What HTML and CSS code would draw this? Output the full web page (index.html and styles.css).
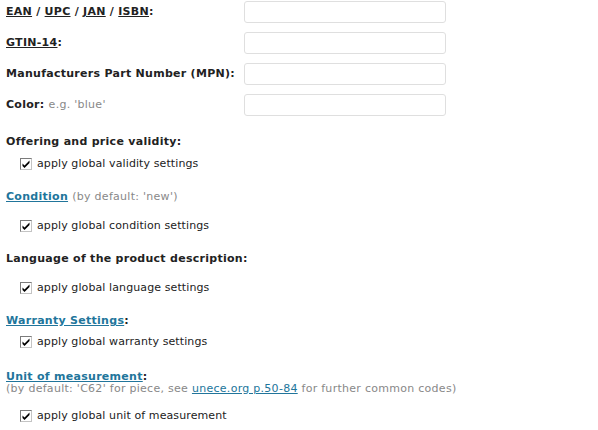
FILE: index.html
```html
<!DOCTYPE html>
<html>
<head>
<meta charset="utf-8">
<link rel="stylesheet" href="styles.css">
</head>
<body>
<div class="page">
  <div class="fields">
    <div class="label"><a class="plain">EAN</a> / <a class="plain">UPC</a> / <a class="plain">JAN</a> / <a class="plain">ISBN</a>:</div>
    <div class="input"></div>
    <div class="label"><a class="plain">GTIN-14</a>:</div>
    <div class="input"></div>
    <div class="label">Manufacturers Part Number (MPN):</div>
    <div class="input"></div>
    <div class="label">Color: <span class="hint">e.g. 'blue'</span></div>
    <div class="input"></div>
  </div>

  <div class="section s-offer">
    <div class="head">Offering and price validity:</div>
    <div class="check"><span class="box"><svg viewBox="0 0 10 10" width="10" height="10"><path d="M1.5 4.5 L3.5 6.5 L8.5 1.5 L8.5 4 L3.5 9 L1.5 7 Z" fill="#000"/></svg></span>apply global validity settings</div>
  </div>

  <div class="section s-cond">
    <div class="head"><a class="link">Condition</a> <span class="hint">(by default: 'new')</span></div>
    <div class="check"><span class="box"><svg viewBox="0 0 10 10" width="10" height="10"><path d="M1.5 4.5 L3.5 6.5 L8.5 1.5 L8.5 4 L3.5 9 L1.5 7 Z" fill="#000"/></svg></span>apply global condition settings</div>
  </div>

  <div class="section s-lang">
    <div class="head">Language of the product description:</div>
    <div class="check"><span class="box"><svg viewBox="0 0 10 10" width="10" height="10"><path d="M1.5 4.5 L3.5 6.5 L8.5 1.5 L8.5 4 L3.5 9 L1.5 7 Z" fill="#000"/></svg></span>apply global language settings</div>
  </div>

  <div class="section s-warr">
    <div class="head"><a class="link">Warranty Settings</a>:</div>
    <div class="check"><span class="box"><svg viewBox="0 0 10 10" width="10" height="10"><path d="M1.5 4.5 L3.5 6.5 L8.5 1.5 L8.5 4 L3.5 9 L1.5 7 Z" fill="#000"/></svg></span>apply global warranty settings</div>
  </div>

  <div class="section s-unit">
    <div class="head"><a class="link">Unit of measurement</a>:</div>
    <div class="sub">(by default: 'C62' for piece, see <a class="link thin">unece.org p.50-84</a> for further common codes)</div>
    <div class="check"><span class="box"><svg viewBox="0 0 10 10" width="10" height="10"><path d="M1.5 4.5 L3.5 6.5 L8.5 1.5 L8.5 4 L3.5 9 L1.5 7 Z" fill="#000"/></svg></span>apply global unit of measurement</div>
  </div>
</div>
</body>
</html>
```

FILE: styles.css
```css
html, body {
  margin: 0;
  padding: 0;
  background: #fff;
}
body {
  font-family: "DejaVu Sans", Verdana, sans-serif;
  font-size: 11px;
  letter-spacing: 0.28px;
  color: #222;
}
.page {
  padding: 1px 0 0 6px;
}
.fields {
  display: grid;
  grid-template-columns: 238px 202px;
  row-gap: 9px;
  align-items: center;
}
.label {
  font-weight: bold;
  line-height: 14px;
}
.plain {
  color: #222;
  text-decoration: underline;
}
.input {
  height: 20px;
  border: 1px solid #dfdfdf;
  border-radius: 3px;
  background: #fff;
}
.hint {
  font-weight: normal;
  color: #888;
}
.head {
  font-weight: bold;
  line-height: 14px;
}
.link {
  color: #21759b;
  text-decoration: underline;
}
.link.thin {
  font-weight: normal;
}
.sub {
  color: #888;
  line-height: 11px;
}
.check {
  display: flex;
  align-items: center;
  line-height: 14px;
  padding-left: 14px;
  letter-spacing: 0.1px;
}
.box {
  box-sizing: border-box;
  width: 12px;
  height: 12px;
  border: 1px solid #7b7b7b;
  border-right-color: #c4c4c4;
  border-bottom-color: #c4c4c4;
  background: #fff;
  margin-right: 5px;
  display: flex;
  align-items: center;
  justify-content: center;
  overflow: hidden;
}
.box svg {
  display: block;
  width: 10px;
  height: 10px;
}
.s-offer { margin-top: 19px; }
.s-offer .check { margin-top: 8px; }
.s-cond { margin-top: 19px; }
.s-cond .check { margin-top: 15px; }
.s-lang { margin-top: 19px; }
.s-lang .check { margin-top: 15px; }
.s-warr { margin-top: 19px; }
.s-warr .check { margin-top: 7px; }
.s-unit { margin-top: 22px; }
.s-unit .head { line-height: 12px; }
.s-unit .check { margin-top: 15px; }
```
